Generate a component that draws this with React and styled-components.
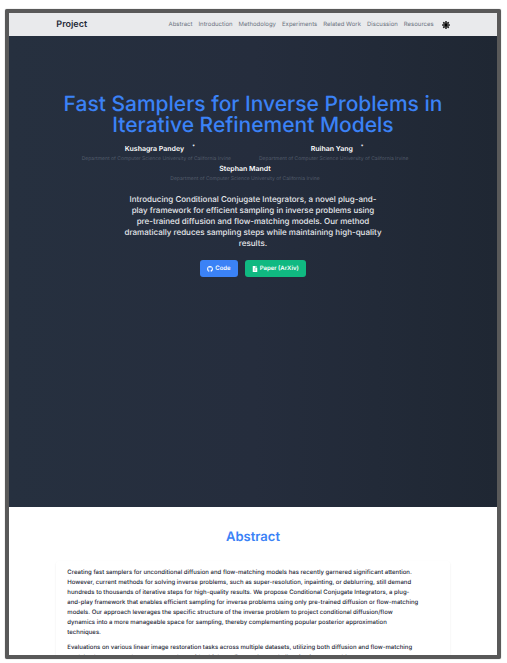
import React from "react";
import styled, { createGlobalStyle } from "styled-components";
import { FaGithub, FaFileAlt } from "react-icons/fa";

const GlobalStyle = createGlobalStyle`
  * { box-sizing: border-box; }
  html, body { margin: 0; background: #fff; }
  body { font-family: Inter, sans-serif; overflow: hidden; text-rendering: geometricPrecision; }
  h1, h2, h3, p { margin: 0; }
`;

const Page = styled.div`
  height: 100vh;
  padding: 9px 6px 4px 5px;
`;

const Frame = styled.div`
  height: 100%;
  overflow: hidden;
  border: 4px solid #595959;
  border-radius: 2px;
  box-shadow: 0 0 1px #777;
  background: #fff;
`;

const Container = styled.div`
  width: 80.6%;
  margin: 0 auto;
`;

const Header = styled.header`
  background: #e9eaec;
`;

const Bar = styled(Container)`
  display: flex;
  align-items: center;
  justify-content: space-between;
  height: 23px;
`;

const Brand = styled.a`
  color: #1f2937;
  font-size: 9px;
  line-height: 12px;
  font-weight: 600;
  text-decoration: none;
`;

const Nav = styled.nav`
  display: flex;
  align-items: center;
  gap: 6px;
`;

const NavLink = styled.a`
  color: #6b7280;
  font-size: 6px;
  line-height: 8px;
  text-decoration: none;
`;

const ThemeButton = styled.button`
  display: flex;
  margin-left: 2px;
  padding: 0;
  border: 0;
  background: none;
  color: #222;
  cursor: pointer;
`;

const Hero = styled.section`
  display: flex;
  flex-direction: column;
  align-items: center;
  min-height: 71vh;
  padding: 58px 0 0;
  text-align: center;
  color: #fff;
  background: linear-gradient(to right, #26303f, #252d3d 50%, #1f2733);
`;

const Title = styled.h1`
  color: #3b82f6;
  font-size: 21px;
  line-height: 21px;
  font-weight: 550;
  white-space: nowrap;
`;

const Authors = styled.div`
  display: flex;
  flex-wrap: wrap;
  justify-content: center;
  column-gap: 12px;
  padding-top: 7px;
`;

const Author = styled.div`
  display: flex;
  flex-direction: column;
  align-items: center;
  margin-right: 16px;
`;

const AuthorName = styled.h3`
  display: flex;
  gap: 8px;
  font-size: 7px;
  line-height: 12px;
  font-weight: 600;
`;

const Mark = styled.sup`
  margin-right: -7px;
  font-size: 5px;
  line-height: 8px;
`;

const Affiliation = styled.p`
  color: #535c6b;
  font-size: 5px;
  line-height: 8px;
  white-space: nowrap;
`;

const Intro = styled.p`
  padding-top: 11px;
  color: #e5e7eb;
  font-size: 8px;
  line-height: 11px;
  font-weight: 500;
`;

const Actions = styled.div`
  display: flex;
  gap: 7px;
  padding-top: 11px;
`;

const Action = styled.a`
  display: flex;
  align-items: center;
  gap: 2px;
  height: 17px;
  padding: 0 7px;
  border-radius: 3px;
  background: ${(p) => p.$color};
  color: #fff;
  font-size: 6px;
  font-weight: 600;
  text-decoration: none;
  white-space: nowrap;
`;

const SectionTitle = styled.h2`
  padding: 22px 0 16px;
  color: #3b82f6;
  font-size: 13px;
  line-height: 16px;
  font-weight: 600;
  text-align: center;
`;

const Card = styled(Container)`
  display: grid;
  gap: 5px;
  padding: 7px 11px;
  border-radius: 3px;
  box-shadow: 0 1px 2px rgba(0, 0, 0, 0.09);
  color: #1f2937;
  font-size: 6px;
  line-height: 10px;
  font-weight: 500;
  white-space: nowrap;
`;

const links = [
  "Abstract",
  "Introduction",
  "Methodology",
  "Experiments",
  "Related Work",
  "Discussion",
  "Resources",
];

const authors = [
  { name: "Kushagra Pandey", mark: true },
  { name: "Ruihan Yang", mark: true },
  { name: "Stephan Mandt", mark: false },
];

const titleLines = [
  "Fast Samplers for Inverse Problems in",
  "Iterative Refinement Models",
];

const introLines = [
  "Introducing Conditional Conjugate Integrators, a novel plug-and-",
  "play framework for efficient sampling in inverse problems using",
  "pre-trained diffusion and flow-matching models. Our method",
  "dramatically reduces sampling steps while maintaining high-quality",
  "results.",
];

const abstract = [
  [
    "Creating fast samplers for unconditional diffusion and flow-matching models has recently garnered significant attention.",
    "However, current methods for solving inverse problems, such as super-resolution, inpainting, or deblurring, still demand",
    "hundreds to thousands of iterative steps for high-quality results. We propose Conditional Conjugate Integrators, a plug-",
    "and-play framework that enables efficient sampling for inverse problems using only pre-trained diffusion or flow-matching",
    "models. Our approach leverages the specific structure of the inverse problem to project conditional diffusion/flow",
    "dynamics into a more manageable space for sampling, thereby complementing popular posterior approximation",
    "techniques.",
  ],
  [
    "Evaluations on various linear image restoration tasks across multiple datasets, utilizing both diffusion and flow-matching",
    "models, demonstrate that our approach provides high-quality results on challenging inverse problems.",
  ],
];

const Lines = ({ items }) =>
  items.map((line, i) => (
    <React.Fragment key={line}>
      {i > 0 && <br />}
      {line}
    </React.Fragment>
  ));

const spokes = [0, 45, 90, 135, 180, 225, 270, 315];

const SunIcon = () => (
  <svg width="8" height="8" viewBox="0 0 16 16" aria-hidden="true">
    {spokes.map((a) => (
      <rect key={a} x="6.4" y="0" width="3.2" height="4" rx="1" fill="currentColor" transform={`rotate(${a} 8 8)`} />
    ))}
    <circle cx="8" cy="8" r="5.4" fill="none" stroke="#444" strokeWidth="1.6" />
    <circle cx="8" cy="8" r="3.8" fill="#000" />
  </svg>
);

export default function App() {
  return (
    <Page>
      <GlobalStyle />
      <Frame>
        <Header>
          <Bar>
            <Brand href="#top">Project</Brand>
            <Nav>
              {links.map((l) => (
                <NavLink key={l} href={`#${l.toLowerCase().replace(" ", "-")}`}>{l}</NavLink>
              ))}
              <ThemeButton type="button" aria-label="Toggle theme">
                <SunIcon />
              </ThemeButton>
            </Nav>
          </Bar>
        </Header>
        <Hero id="top">
          <Title>
            <Lines items={titleLines} />
          </Title>
          <Authors>
            {authors.map((a) => (
              <Author key={a.name}>
                <AuthorName>
                  {a.name}
                  {a.mark && <Mark>*</Mark>}
                </AuthorName>
                <Affiliation>Department of Computer Science University of California Irvine</Affiliation>
              </Author>
            ))}
          </Authors>
          <Intro>
            <Lines items={introLines} />
          </Intro>
          <Actions>
            <Action href="#code" $color="#3b82f6">
              <FaGithub size={6} />
              Code
            </Action>
            <Action href="#paper" $color="#10b981">
              <FaFileAlt size={6} />
              Paper (ArXiv)
            </Action>
          </Actions>
        </Hero>
        <section id="abstract">
          <SectionTitle>Abstract</SectionTitle>
          <Card>
            {abstract.map((p) => (
              <p key={p[0]}>
                <Lines items={p} />
              </p>
            ))}
          </Card>
        </section>
      </Frame>
    </Page>
  );
}
